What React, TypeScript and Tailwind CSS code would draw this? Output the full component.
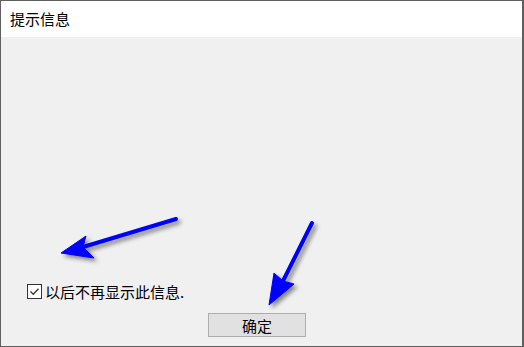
import React from "react";

const font = { fontFamily: '"Noto Sans CJK SC", "Noto Sans", sans-serif' };

function Arrows() {
    return (
        <svg
            className="absolute left-0 top-0 pointer-events-none"
            width={524}
            height={347}
            viewBox="0 0 524 347"
        >
            <defs>
                <filter id="sh" x="-20%" y="-20%" width="140%" height="140%">
                    <feDropShadow dx="3" dy="3" stdDeviation="2" floodColor="#000" floodOpacity="0.45" />
                </filter>
            </defs>
            <g filter="url(#sh)" fill="#0000ff" stroke="#0000ff">
                {/* left arrow */}
                <line x1={175} y1={218} x2={82} y2={246} strokeWidth={4} strokeLinecap="round" />
                <path d="M60 252 L85 235 L82 246 L93 257 Z" strokeWidth={1} strokeLinejoin="round" />
                {/* right arrow */}
                <line x1={311} y1={222} x2={282} y2={280} strokeWidth={4} strokeLinecap="round" />
                <path d="M268 304 L273 272 L282 280 L293 283 Z" strokeWidth={1} strokeLinejoin="round" />
            </g>
        </svg>
    );
}

export default function App() {
    return (
        <div
            className="relative w-[524px] h-[347px] flex flex-col border border-[#5f5f5f] border-r-2 bg-[#f0f0f0] text-black"
            style={font}
        >
            {/* Title bar */}
            <div className="h-[36px] bg-white flex items-center pl-[9px] text-[15px]">
                提示信息
            </div>

            {/* Body */}
            <div className="flex-1 flex flex-col justify-end pb-[9px]">
                <div className="flex items-center pl-[26px] text-[15px] h-[16px]">
                    <div className="w-[15px] h-[15px] border border-[#333] bg-white flex items-center justify-center">
                        <svg width={11} height={11} viewBox="0 0 11 11">
                            <path d="M1.5 5.5 L4.3 8.3 L9.5 2.8" fill="none" stroke="#333" strokeWidth={1.3} />
                        </svg>
                    </div>
                    <span className="ml-[3px] leading-none">以后不再显示此信息.</span>
                </div>
                <button className="mt-[14px] ml-[207px] w-[98px] h-[24px] bg-[#e1e1e1] border border-[#adadad] text-[15px] flex items-center justify-center leading-none">
                    确定
                </button>
            </div>
            <Arrows />
        </div>
    );
}
